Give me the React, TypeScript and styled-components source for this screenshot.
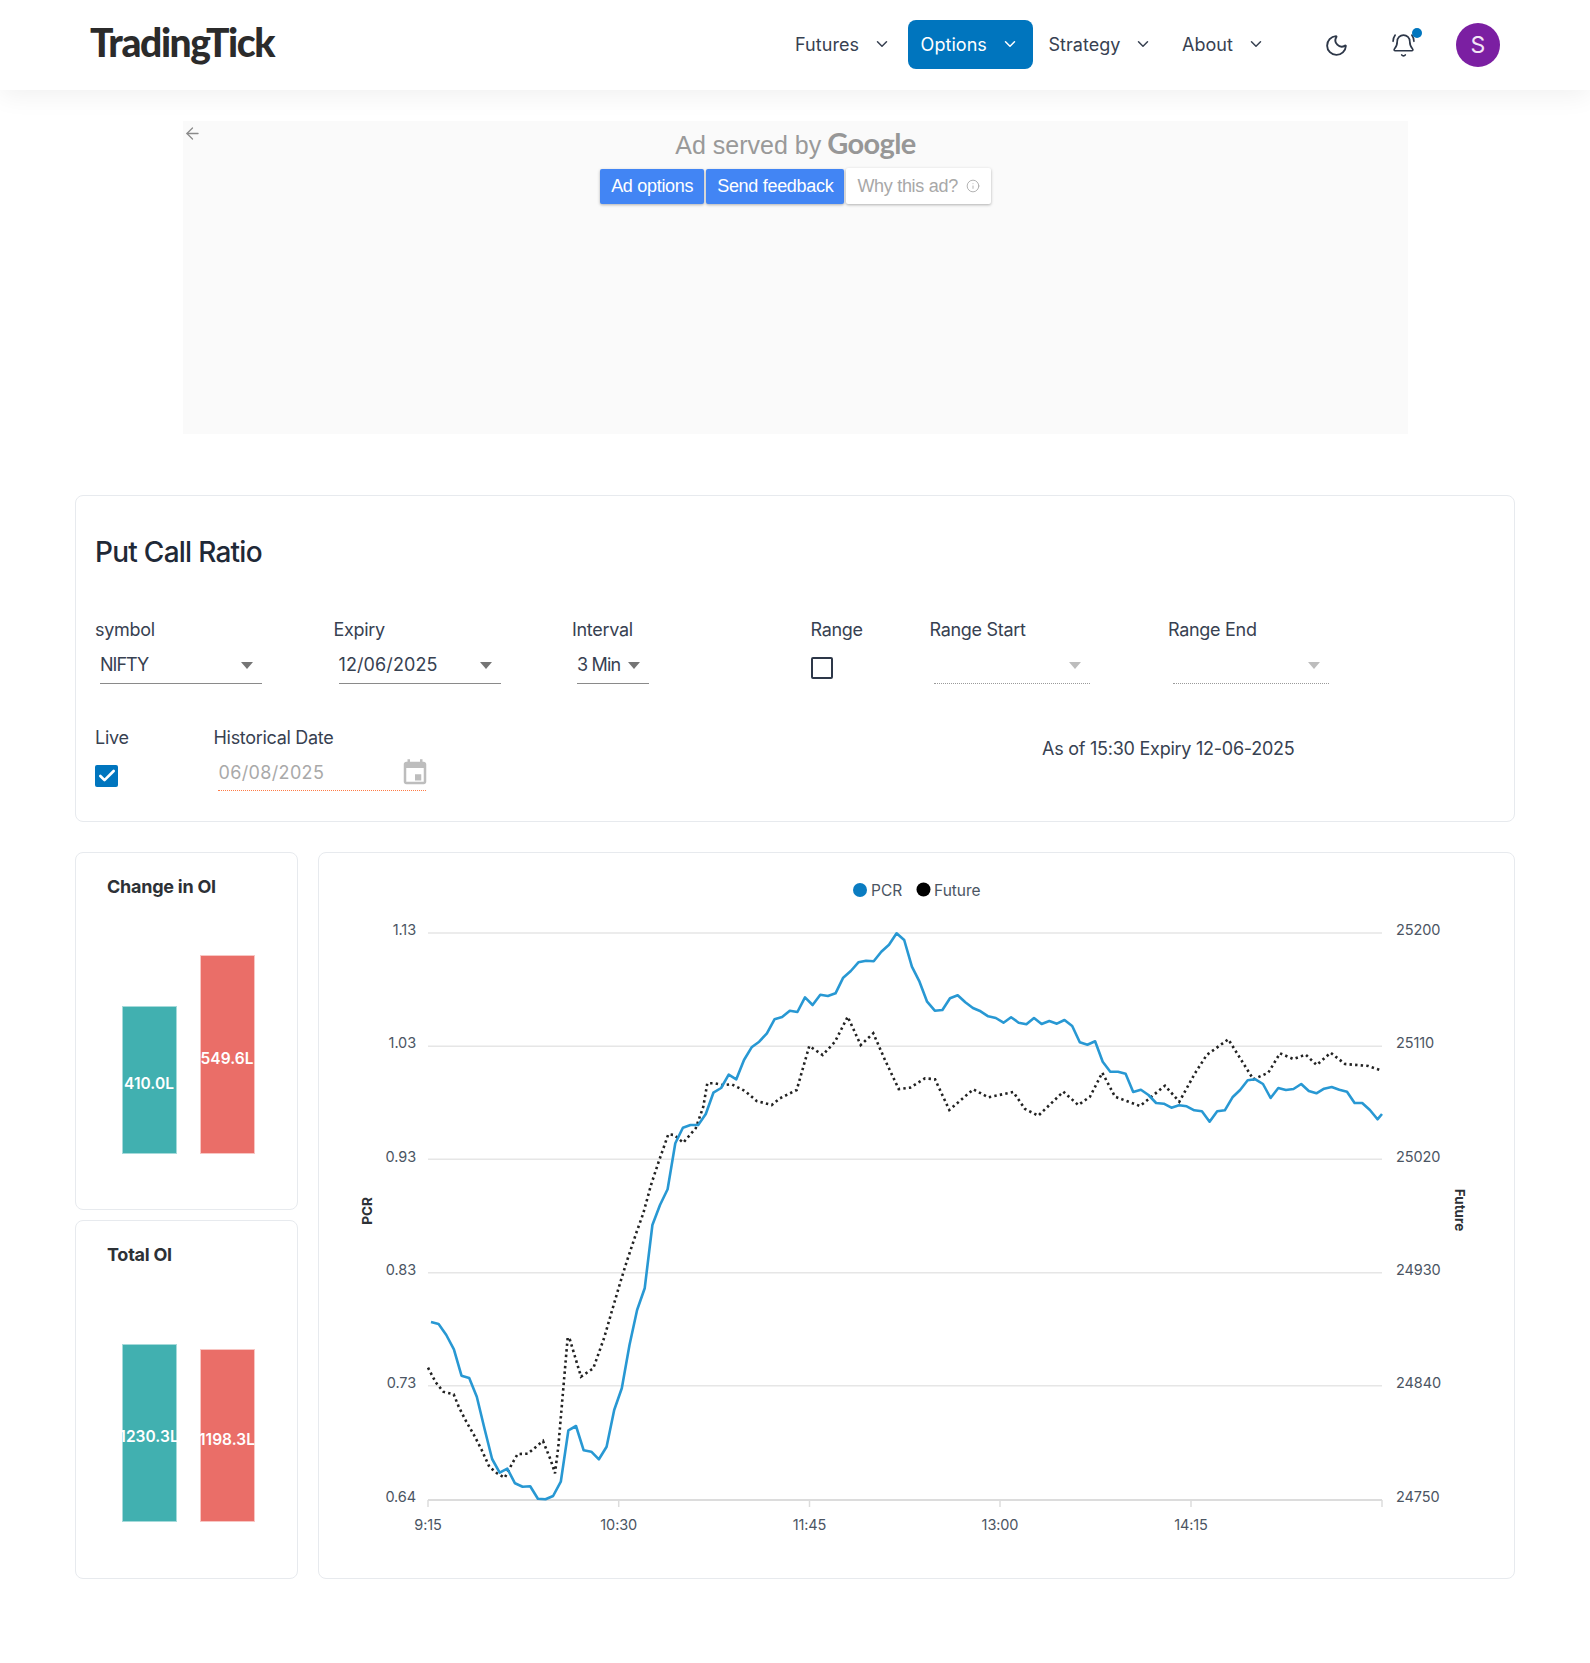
import React from "react";
import styled, { createGlobalStyle } from "styled-components";
import { BellRing, ChevronDown, Moon, ArrowLeft, Info, Check } from "lucide-react";

const GlobalStyle = createGlobalStyle`
  html, body { margin: 0; padding: 0; background: #fff; }
  body { font-family: Inter, "Liberation Sans", sans-serif; color: #2d3748; }
  * { box-sizing: border-box; }
`;

const Page = styled.div`
  width: 1590px;
  min-height: 1663px;
  background: #fff;
`;

const Header = styled.header`
  display: flex;
  align-items: center;
  height: 90px;
  padding: 0 90px;
  background: #fff;
  box-shadow: 0 6px 24px rgba(0, 0, 0, 0.06);
`;

const Logo = styled.div`
  font-family: Lato, sans-serif;
  font-weight: 900;
  font-size: 39px;
  letter-spacing: -1.4px;
  color: #2b2b2b;
  line-height: 1;
  margin-top: -6px;
`;

const Nav = styled.nav`
  display: flex;
  align-items: center;
  gap: 2.5px;
  margin-left: auto;
  margin-top: -2px;
`;

const NavItem = styled.div<{ $active?: boolean }>`
  display: flex;
  align-items: center;
  gap: 14px;
  height: 49px;
  padding: 0 14px 0 13px;
  border-radius: 8px;
  font-size: 18px;
  letter-spacing: 0.05px;
  background: ${(p) => (p.$active ? "#0075be" : "transparent")};
  color: ${(p) => (p.$active ? "#fff" : "#374151")};
`;

const Actions = styled.div`
  display: flex;
  align-items: center;
  margin-left: 45px;
  color: #2d3748;
`;

const BellWrap = styled.div`
  position: relative;
  display: flex;
  margin-left: 42px;
  margin-right: 40px;
`;

const BellDot = styled.span`
  position: absolute;
  top: -5px;
  right: -6px;
  width: 10px;
  height: 10px;
  border-radius: 50%;
  background: #0075be;
`;

const Avatar = styled.div`
  display: flex;
  align-items: center;
  justify-content: center;
  width: 44px;
  height: 44px;
  border-radius: 50%;
  background: #7b1fa2;
  color: #f3e5f5;
  font-size: 23px;
`;

const AdFrame = styled.section`
  position: relative;
  display: flex;
  flex-direction: column;
  align-items: center;
  width: 1225px;
  height: 313px;
  margin: 31px 0 0 183px;
  background: #fafafa;
  font-family: "Liberation Sans", Arial, sans-serif;
`;

const AdBack = styled.div`
  position: absolute;
  top: 3px;
  left: 0;
  display: flex;
  color: #8a8a8a;
`;

const AdServed = styled.div`
  display: flex;
  align-items: baseline;
  gap: 6px;
  height: 47px;
  padding-top: 4px;
  font-size: 25px;
  color: #999;
`;

const AdGoogle = styled.span`
  font-family: Lato, sans-serif;
  font-size: 29px;
  font-weight: 700;
  letter-spacing: -0.6px;
  color: #979797;
`;

const AdButtons = styled.div`
  display: flex;
  align-items: center;
  gap: 2px;
`;

const AdButton = styled.div<{ $light?: boolean }>`
  display: flex;
  align-items: center;
  gap: 8px;
  height: ${(p) => (p.$light ? "36px" : "35px")};
  padding: 0 11px;
  border-radius: 2px;
  font-size: 18px;
  letter-spacing: -0.3px;
  background: ${(p) => (p.$light ? "#fff" : "#4285f4")};
  color: ${(p) => (p.$light ? "#a8a8a8" : "#fff")};
  box-shadow: 0 1px 3px rgba(0, 0, 0, 0.3);
`;

const Content = styled.main`
  width: 1440px;
  margin: 61px 0 0 75px;
`;

const Card = styled.section`
  background: #fff;
  border: 1px solid #e7eaee;
  border-radius: 8px;
`;

const FilterCard = styled(Card)`
  height: 327px;
  padding: 38px 0 0 19px;
`;

const Title = styled.h1`
  margin: 0 0 48px;
  font-size: 28px;
  line-height: 36px;
  font-weight: 500;
  letter-spacing: -0.74px;
  color: #1f2937;
`;

const FilterRow = styled.div<{ $cols: string; $mt?: number }>`
  display: grid;
  grid-template-columns: ${(p) => p.$cols};
  margin-top: ${(p) => p.$mt ?? 0}px;
`;

const Field = styled.div`
  display: flex;
  flex-direction: column;
`;

const Label = styled.label`
  font-size: 18px;
  line-height: 24px;
  letter-spacing: -0.3px;
  color: #374151;
  margin-bottom: 6px;
`;

const SelectBox = styled.div<{ $w: number; $disabled?: boolean; $spacing?: number; $ml?: number }>`
  position: relative;
  display: flex;
  align-items: center;
  width: ${(p) => p.$w}px;
  height: 36px;
  margin-left: ${(p) => p.$ml ?? 5}px;
  padding-bottom: 3px;
  font-size: 18px;
  letter-spacing: ${(p) => p.$spacing ?? 0.1}px;
  color: #374151;
  border-bottom: 1px ${(p) => (p.$disabled ? "dotted #9a9a9a" : "solid #8a8a8a")};
`;

const Caret = styled.span<{ $disabled?: boolean }>`
  position: absolute;
  top: 14px;
  right: 9px;
  border-left: 6.5px solid transparent;
  border-right: 6.5px solid transparent;
  border-top: 7px solid ${(p) => (p.$disabled ? "#bdbdbd" : "#757575")};
`;

const CheckBox = styled.div<{ $checked?: boolean }>`
  display: flex;
  align-items: center;
  justify-content: center;
  width: ${(p) => (p.$checked ? 23 : 22)}px;
  height: 22px;
  margin-top: 9px;
  border-radius: 2px;
  color: #fff;
  background: ${(p) => (p.$checked ? "#0075be" : "#fff")};
  border: ${(p) => (p.$checked ? "none" : "2.5px solid #2d3748")};
`;

const DateBox = styled.div`
  display: flex;
  align-items: center;
  justify-content: space-between;
  width: 208px;
  height: 35px;
  margin-left: 4px;
  padding: 0 0 2px 1px;
  font-size: 18px;
  letter-spacing: 0.35px;
  color: #a9a9a9;
  border-bottom: 1px dotted #ff7a45;
`;

const CalendarIcon = styled.svg`
  width: 30px;
  height: 30px;
  margin-right: -4px;
  margin-top: 1px;
  fill: #bdbdbd;
`;

const AsOf = styled.div`
  margin-top: 11px;
  font-size: 18px;
  line-height: 24px;
  letter-spacing: -0.25px;
  color: #374151;
`;

const ChartGrid = styled.div`
  display: grid;
  grid-template-columns: 223px 1197px;
  gap: 20px;
  margin-top: 30px;
`;

const LeftColumn = styled.div`
  display: flex;
  flex-direction: column;
  gap: 10px;
`;

const OiCard = styled(Card)<{ $h: number; $pb: number }>`
  display: flex;
  flex-direction: column;
  height: ${(p) => p.$h}px;
  padding: 22px 0 ${(p) => p.$pb}px 31px;
`;

const OiTitle = styled.h2`
  margin: 0;
  font-size: 18px;
  line-height: 24px;
  font-weight: 700;
  letter-spacing: -0.25px;
  color: #2d3136;
`;

const Bars = styled.div`
  display: flex;
  align-items: flex-end;
  gap: 23px;
  margin: auto 0 0 14.5px;
`;

const Bar = styled.div<{ $h: number; $color: string; $edge: string }>`
  display: flex;
  align-items: center;
  justify-content: center;
  width: 55px;
  height: ${(p) => p.$h}px;
  padding-top: 7px;
  background: ${(p) => p.$color};
  border: 1px solid ${(p) => p.$edge};
  color: #fff;
  font-size: 15.5px;
  font-weight: 600;
  letter-spacing: 0.05px;
  white-space: nowrap;
`;

const ChartCard = styled(Card)`
  height: 727px;
`;

const ChartSvg = styled.svg`
  display: block;
  width: 1195px;
  height: 725px;
`;

const Tick = styled.text`
  font-family: Inter, sans-serif;
  font-size: 14.5px;
  letter-spacing: -0.1px;
  fill: #4b5563;
`;

const LegendText = styled.text`
  font-family: Inter, sans-serif;
  font-size: 15.5px;
  fill: #4b5563;
`;

const AxisTitle = styled.text`
  font-family: Inter, sans-serif;
  font-size: 13.5px;
  font-weight: 700;
  fill: #2d3136;
`;

const Z9 = [186,192,225,268,347,354,410,505,597,638,626,670,680,679,716,718,708,665,511,498,571,575,598,560,450,385,255,150,85];
const Z7 = [915,855,808,670,623,615,615,582,518,504,464,478,420,382,365,340,298,291,272,276,232,255,224,228,220,173,153,127,122,124,95,74,40,60,140,185];
const Z8 = [245,272,270,235,226,247,264,274,289,294,308,292,308,313,294,312,303,311,300,318,367,374,364,425,455,455,461,516,509,525,549,551,563,556,559,571,574,605,574,571,532,510,481,478,492,534,504,510,507,492,513,520,506,501,509,515,549,549,570,598,582];

const pcrY = [...Z9.map((y) => 1260 + y / 3), ...Z7.map((y) => 920 + y / 3), ...Z8.map((y) => 920 + y / 3)];
const pcrPoints = pcrY
  .map((y, i) => `${Math.min(431 + 7.633 * i, 1382).toFixed(1)},${y.toFixed(1)}`)
  .join(" ");

const F9 = [[24,323],[47,367],[70,395],[101,403],[116,440],[139,485],[162,525],[185,570],[208,620],[231,640],[254,653],[277,610],[293,582],[323,581],[369,543],[392,600],[405,640],[415,560],[443,232],[450,240],[483,350],[520,325],[552,235],[575,155],[600,70],[620,5]];
const F7 = [[650,935],[670,880],[693,795],[716,725],[745,643],[763,645],[790,668],[827,625],[850,560],[862,490],[885,490],[908,495],[935,493],[975,513],[1010,543],[1055,555],[1080,535],[1130,510],[1168,378],[1208,405],[1245,365],[1283,290],[1322,375],[1360,340],[1395,420],[1436,507]];
const F8 = [[30,503],[75,475],[105,478],[148,570],[220,508],[265,532],[340,516],[375,567],[415,587],[490,515],[535,555],[570,530],[607,458],[645,530],[720,558],[795,497],[838,545],[885,460],[920,405],[985,358],[1060,478],[1105,458],[1140,400],[1180,417],[1217,404],[1250,435],[1292,398],[1335,432],[1405,438],[1440,450]];

const futurePoints = [
  ...F9.map(([x, y]) => [420 + x / 3, 1260 + y / 3]),
  ...F7.map(([x, y]) => [420 + x / 3, 920 + y / 3]),
  ...F8.map(([x, y]) => [900 + x / 3, 920 + y / 3]),
]
  .map(([x, y]) => `${x.toFixed(1)},${y.toFixed(1)}`)
  .join(" ");

const gridLines = [
  { y: 933, ty: 935, left: "1.13", right: "25200" },
  { y: 1046.3, ty: 1048.3, left: "1.03", right: "25110" },
  { y: 1159.3, ty: 1162, left: "0.93", right: "25020" },
  { y: 1272.7, ty: 1274.7, left: "0.83", right: "24930" },
  { y: 1385.7, ty: 1387.7, left: "0.73", right: "24840" },
  { y: 1500, ty: 1501.5, left: "0.64", right: "24750" },
];

const xTicks = [
  { x: 428, label: "9:15" },
  { x: 618.7, label: "10:30" },
  { x: 809.5, label: "11:45" },
  { x: 1000, label: "13:00" },
  { x: 1191, label: "14:15" },
  { x: 1382, label: "" },
];

function LineChart() {
  return (
    <ChartSvg viewBox="319 853 1195 725">
      <circle cx={860} cy={890} r={7} fill="#0a7cc1" />
      <LegendText x={871} y={896}>PCR</LegendText>
      <circle cx={923.5} cy={889.5} r={7} fill="#000" />
      <LegendText x={934} y={896}>Future</LegendText>

      {gridLines.map((g) => (
        <g key={g.left}>
          <line x1={428} x2={1382} y1={g.y} y2={g.y} stroke={g.left === "0.64" ? "#dcdcdc" : "#e6e6e6"} strokeWidth={g.left === "0.64" ? 2 : 1.4} />
          <Tick x={416} y={g.ty} textAnchor="end">{g.left}</Tick>
          <Tick x={1396} y={g.ty}>{g.right}</Tick>
        </g>
      ))}

      {xTicks.map((t) => (
        <g key={t.x}>
          <line x1={t.x} x2={t.x} y1={1500} y2={1507} stroke="#dcdcdc" strokeWidth={1.5} />
          <Tick x={t.x} y={1530} textAnchor="middle">{t.label}</Tick>
        </g>
      ))}

      <AxisTitle transform="translate(372 1211) rotate(-90)" textAnchor="middle">PCR</AxisTitle>
      <AxisTitle transform="translate(1455 1210) rotate(90)" textAnchor="middle">Future</AxisTitle>

      <polyline points={futurePoints} fill="none" stroke="#222" strokeWidth={2.6} strokeDasharray="2.4 3.2" />
      <polyline points={pcrPoints} fill="none" stroke="#2898d3" strokeWidth={2.6} strokeLinejoin="round" />
    </ChartSvg>
  );
}

function OiBars({ teal, red, tealH, redH }: { teal: string; red: string; tealH: number; redH: number }) {
  return (
    <Bars>
      <Bar $h={tealH} $color="#41b0b0" $edge="#a5dada">{teal}</Bar>
      <Bar $h={redH} $color="#ea6e68" $edge="#f8c6c3">{red}</Bar>
    </Bars>
  );
}

const navItems = [
  { label: "Futures" },
  { label: "Options", active: true },
  { label: "Strategy" },
  { label: "About" },
];

export default function App() {
  return (
    <Page>
      <GlobalStyle />
      <Header>
        <Logo>TradingTick</Logo>
        <Nav>
          {navItems.map((n) => (
            <NavItem key={n.label} $active={n.active}>
              {n.label}
              <ChevronDown size={18} strokeWidth={2} />
            </NavItem>
          ))}
        </Nav>
        <Actions>
          <Moon size={25} strokeWidth={1.8} />
          <BellWrap>
            <BellRing size={25} strokeWidth={1.6} />
            <BellDot />
          </BellWrap>
          <Avatar>S</Avatar>
        </Actions>
      </Header>

      <AdFrame>
        <AdBack><ArrowLeft size={19} strokeWidth={1.6} /></AdBack>
        <AdServed>Ad served by <AdGoogle>Google</AdGoogle></AdServed>
        <AdButtons>
          <AdButton>Ad options</AdButton>
          <AdButton>Send feedback</AdButton>
          <AdButton $light>Why this ad? <Info size={14} strokeWidth={1.5} /></AdButton>
        </AdButtons>
      </AdFrame>

      <Content>
        <FilterCard>
          <Title>Put Call Ratio</Title>
          <FilterRow $cols="238.5px 238.5px 238.5px 119px 238.5px 238.5px">
            <Field>
              <Label>symbol</Label>
              <SelectBox $w={162} $spacing={-1}>NIFTY<Caret /></SelectBox>
            </Field>
            <Field>
              <Label>Expiry</Label>
              <SelectBox $w={162}>12/06/2025<Caret /></SelectBox>
            </Field>
            <Field>
              <Label>Interval</Label>
              <SelectBox $w={72} $spacing={-0.8}>3 Min<Caret /></SelectBox>
            </Field>
            <Field>
              <Label>Range</Label>
              <CheckBox />
            </Field>
            <Field>
              <Label>Range Start</Label>
              <SelectBox $w={156} $ml={4} $disabled><Caret $disabled /></SelectBox>
            </Field>
            <Field>
              <Label>Range End</Label>
              <SelectBox $w={156} $disabled><Caret $disabled /></SelectBox>
            </Field>
          </FilterRow>
          <FilterRow $cols="118.5px 828.5px auto" $mt={42}>
            <Field>
              <Label>Live</Label>
              <CheckBox $checked><Check size={20} strokeWidth={3.2} /></CheckBox>
            </Field>
            <Field>
              <Label>Historical Date</Label>
              <DateBox>
                06/08/2025
                <CalendarIcon viewBox="0 0 24 24">
                  <path d="M19 3h-1V1h-2v2H8V1H6v2H5c-1.11 0-1.99.9-1.99 2L3 19c0 1.1.89 2 2 2h14c1.1 0 2-.9 2-2V5c0-1.1-.9-2-2-2zm0 16H5V8h14v11z" />
                  <rect x="12" y="13" width="5" height="5" />
                </CalendarIcon>
              </DateBox>
            </Field>
            <AsOf>As of 15:30 Expiry 12-06-2025</AsOf>
          </FilterRow>
        </FilterCard>

        <ChartGrid>
          <LeftColumn>
            <OiCard $h={358} $pb={55}>
              <OiTitle>Change in OI</OiTitle>
              <OiBars teal="410.0L" red="549.6L" tealH={148} redH={199} />
            </OiCard>
            <OiCard $h={359} $pb={56}>
              <OiTitle>Total OI</OiTitle>
              <OiBars teal="1230.3L" red="1198.3L" tealH={178} redH={173} />
            </OiCard>
          </LeftColumn>
          <ChartCard>
            <LineChart />
          </ChartCard>
        </ChartGrid>
      </Content>
    </Page>
  );
}
